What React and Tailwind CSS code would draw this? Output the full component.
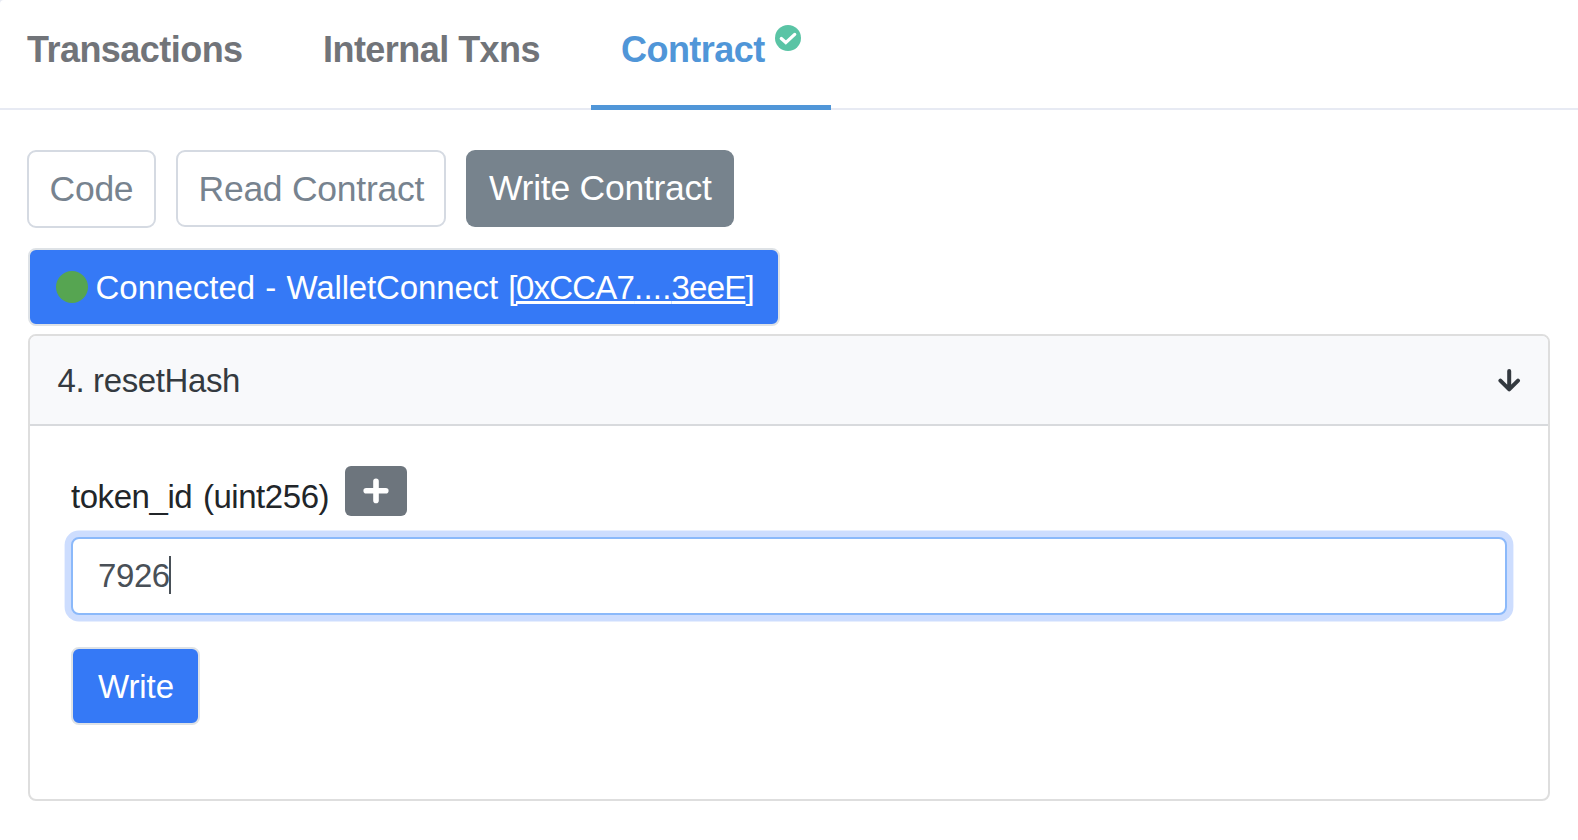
import React from "react";

function CheckBadge() {
  return (
    <svg viewBox="0 0 26 26" className="mt-[25px] ml-[10px] h-[26px] w-[26px] shrink-0">
      <circle cx="13" cy="13" r="13" fill="#5ac4a5" />
      <path d="M6.3 13.6L10.8 17.6L19.7 9.4" fill="none" stroke="#fff" strokeWidth="3.3" strokeLinecap="round" strokeLinejoin="miter" />
    </svg>
  );
}

function Tabs() {
  return (
    <nav className="flex h-[110px] shrink-0 border-b-2 border-[#e7eaf3] text-[36px] leading-[40px] font-bold tracking-[-0.54px] text-[#717479]">
      <div className="ml-[27px] w-[296px] pt-[30px]">Transactions</div>
      <div className="w-[268px] pt-[30px]">Internal Txns</div>
      <div className="flex h-[110px] w-[240px] border-b-[5px] border-[#5096d8] pl-[30px] text-[#5096d8]">
        <span className="w-[144px] pt-[30px]">Contract</span>
        <CheckBadge />
      </div>
    </nav>
  );
}

function ViewButtons() {
  return (
    <div className="mt-[40px] ml-[27px] flex h-[78px] items-start gap-[20px] text-[35.5px] leading-[40px] tracking-[-0.25px] text-[#77838f]">
      <button className="h-[78px] w-[129px] rounded-[9px] border-2 border-[#d5dae2] pb-[1px] pl-[20.5px] text-left">Code</button>
      <button className="h-[77px] w-[270px] rounded-[9px] border-2 border-[#d5dae2] pl-[20.5px] text-left">Read Contract</button>
      <button className="h-[77px] w-[268px] rounded-[9px] bg-[#77838d] pb-[2px] pl-[23px] text-left text-white">Write Contract</button>
    </div>
  );
}

export default function App() {
  return (
    <div className="h-[840px] w-[1578px] bg-[#e7eaf3]">
      <main className="flex h-[840px] flex-col overflow-hidden rounded-tl-[4px] bg-white font-['Liberation_Sans',Arial,sans-serif] whitespace-nowrap">
        <Tabs />
        <ViewButtons />
        <button className="mt-[20px] ml-[28px] flex h-[78px] w-[752px] shrink-0 items-center rounded-[8px] border-2 border-[#dee2e6] bg-[#3579f6] pl-[25.5px] text-[33px] leading-[38px] text-white">
          <span className="h-[32px] w-[32px] rounded-full bg-[#56a551]" />
          <span className="ml-[8px] pt-[2px] [word-spacing:1px]">
            Connected - <span className="tracking-[-0.14px]">WalletConnect</span>{" "}
            <span className="tracking-[-1.4px]">[</span>
            <span className="tracking-[-0.8px]">
              <span className="underline decoration-[3px] underline-offset-[2px] [text-decoration-skip-ink:none]">0xCCA7<span className="tracking-[0.2px]">....</span>3eeE</span>]
            </span>
          </span>
        </button>
        <section className="mt-[8px] ml-[28px] h-[467px] w-[1522px] shrink-0 rounded-[8px] border-2 border-[#dedede]">
          <header className="flex h-[90px] items-center justify-between rounded-t-[6px] border-b-2 border-[#d8dadd] bg-[#f8f9fb] pr-[27px] pl-[27.5px] text-[33px] leading-[38px] text-[#343a40]">
            <span className="pt-[2px] tracking-[-0.38px]">4. resetHash</span>
            <svg viewBox="0 0 24 24" className="h-[24px] w-[24px]">
              <path d="M12.2 3V20M3.4 12.6L12.2 21.4L21 12.6" fill="none" stroke="#343a40" strokeWidth="4" strokeLinecap="round" strokeLinejoin="round" />
            </svg>
          </header>
          <div className="pl-[41px]">
            <div className="flex h-[90px] pt-[40px] text-[33px] leading-[38px] text-[#212529]">
              <span className="w-[274px] pt-[12px] tracking-[-0.45px] [word-spacing:2px]">token_id (uint256)</span>
              <button className="flex h-[50px] w-[62px] items-center justify-center rounded-[6px] bg-[#6d757d]">
                <svg viewBox="0 0 26 26" className="h-[26px] w-[26px]">
                  <path d="M13 3.2V22.4M3.2 12.8H22.8" fill="none" stroke="#fff" strokeWidth="5.6" strokeLinecap="round" />
                </svg>
              </button>
            </div>
            <div className="mt-[21px] flex h-[78px] w-[1436px] items-center rounded-[8px] border-2 border-[#8bb9fa] bg-white pl-[25px] text-[33px] leading-[38px] text-[#495057] shadow-[0_0_0_6.4px_#cdddfe]">
              <span className="w-[71px] tracking-[-0.4px]">7926</span>
              <span className="mb-[2px] h-[38px] w-[2px] bg-[#495057]" />
            </div>
            <button className="mt-[32px] h-[78px] w-[129px] rounded-[8px] border-2 border-[#dee2e6] bg-[#3579f6] pt-[2px] pl-[25px] text-left text-[33px] leading-[38px] tracking-[-0.1px] text-white">Write</button>
          </div>
        </section>
      </main>
    </div>
  );
}
